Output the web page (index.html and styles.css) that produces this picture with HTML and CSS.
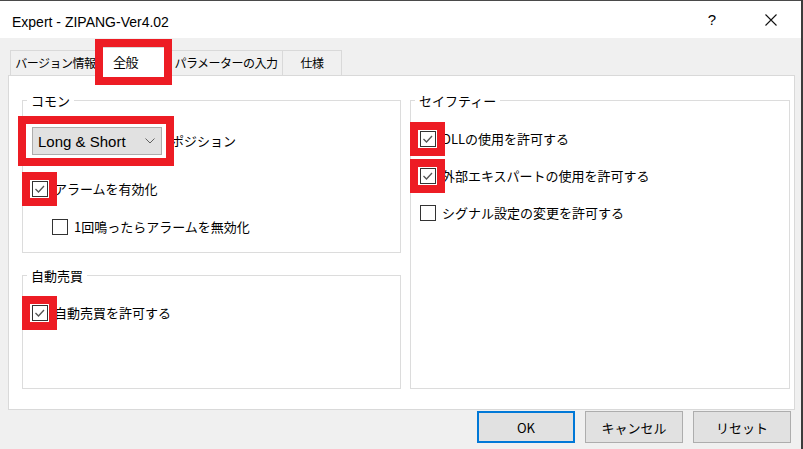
FILE: index.html
```html
<!DOCTYPE html>
<html lang="ja">
<head>
    <meta charset="UTF-8">
    <title>Expert - ZIPANG-Ver4.02</title>
    <link rel="stylesheet" href="styles.css">
</head>
<body>
<div class="window">
    <div class="titlebar">
        <span class="title">Expert - ZIPANG-Ver4.02</span>
        <span class="help">?</span>
        <span class="close">
            <svg width="12" height="12" viewBox="0 0 12 12"><path d="M0.5 0.5 L11.5 11.5 M11.5 0.5 L0.5 11.5" stroke="#111" stroke-width="1.1" fill="none"/></svg>
        </span>
    </div>

    <div class="tabs">
        <div class="tab tab-info">バージョン情報</div>
        <div class="tab tab-general active hl">全般</div>
        <div class="tab tab-params">パラメーターの入力</div>
        <div class="tab tab-spec">仕様</div>
    </div>

    <div class="panel">
        <div class="col">
            <fieldset class="group group-common">
                <legend>コモン</legend>
                <div class="combo-row">
                    <div class="combo hl">
                        <span>Long &amp; Short</span>
                        <svg width="10" height="6" viewBox="0 0 10 6"><path d="M0.5 0.5 L5 5 L9.5 0.5" stroke="#606060" stroke-width="1" fill="none"/></svg>
                    </div>
                    <span class="label">ポジション</span>
                </div>
                <div class="row first">
                    <span class="box checked hl"><svg width="14" height="14" viewBox="0 0 14 14"><path d="M2.5 7 L5.5 10 L11 4" stroke="#555" stroke-width="1.3" fill="none"/></svg></span>
                    <span class="label">アラームを有効化</span>
                </div>
                <div class="row sub">
                    <span class="box"></span>
                    <span class="label">1回鳴ったらアラームを無効化</span>
                </div>
            </fieldset>

            <fieldset class="group group-auto">
                <legend>自動売買</legend>
                <div class="row first">
                    <span class="box checked hl"><svg width="14" height="14" viewBox="0 0 14 14"><path d="M2.5 7 L5.5 10 L11 4" stroke="#555" stroke-width="1.3" fill="none"/></svg></span>
                    <span class="label">自動売買を許可する</span>
                </div>
            </fieldset>
        </div>

        <fieldset class="group group-safety">
            <legend>セイフティー</legend>
            <div class="row first">
                <span class="box checked hl"><svg width="14" height="14" viewBox="0 0 14 14"><path d="M2.5 7 L5.5 10 L11 4" stroke="#555" stroke-width="1.3" fill="none"/></svg></span>
                <span class="label">DLLの使用を許可する</span>
            </div>
            <div class="row">
                <span class="box checked hl"><svg width="14" height="14" viewBox="0 0 14 14"><path d="M2.5 7 L5.5 10 L11 4" stroke="#555" stroke-width="1.3" fill="none"/></svg></span>
                <span class="label">外部エキスパートの使用を許可する</span>
            </div>
            <div class="row">
                <span class="box"></span>
                <span class="label">シグナル設定の変更を許可する</span>
            </div>
        </fieldset>
    </div>

    <div class="buttons">
        <button class="btn default">OK</button>
        <button class="btn">キャンセル</button>
        <button class="btn">リセット</button>
    </div>
</div>
</body>
</html>
```

FILE: styles.css
```css
body {
    margin: 0;
    background: #3c3c3c;
    font-family: "Noto Sans CJK JP", "Liberation Sans", sans-serif;
    color: #000;
}
.window {
    width: 801px;
    height: 448px;
    border-top: 1px solid #4a4a4a;
    background: #f0f0f0;
    overflow: hidden;
}
.titlebar {
    display: flex;
    align-items: center;
    height: 37px;
    background: #fff;
}
.title {
    font-family: "Liberation Sans", sans-serif;
    font-size: 14px;
    margin: 4px 0 0 12px;
    flex: 1;
}
.help {
    font-family: "Liberation Sans", sans-serif;
    font-size: 15px;
    margin-right: 49px;
}
.close {
    display: flex;
    margin-right: 24px;
}

/* tabs */
.tabs {
    display: flex;
    align-items: flex-end;
    margin: 9px 0 0 10px;
}
.tab {
    box-sizing: border-box;
    height: 25px;
    line-height: 23px;
    font-size: 12px;
    letter-spacing: -0.5px;
    text-align: center;
    border: 1px solid #d9d9d9;
    border-bottom: none;
    background: #f0f0f0;
}
.tab + .tab {
    border-left: none;
}
.tab-info { width: 87px; padding-left: 4px; }
.tab-general { width: 73px; }
.tab-params { width: 113px; }
.tab-spec { width: 59px; }
.tab.active {
    position: relative;
    z-index: 1;
    height: 29px;
    line-height: 27px;
    margin-bottom: -1px;
    background: #fff;
    font-size: 13px;
    text-align: left;
    padding-left: 16px;
}

/* red annotation frames */
.hl {
    position: relative;
}
.hl::after {
    content: "";
    position: absolute;
    border: 8px solid #ed1c24;
}
.tab.hl::after {
    top: -9px;
    bottom: -9px;
    left: -2px;
    right: -3px;
}
.combo.hl::after {
    top: -12px;
    bottom: -12px;
    left: -15px;
    right: -13px;
}
.box.hl::after {
    top: -10px;
    bottom: -10px;
    left: -11px;
    right: -10px;
}

/* panel */
.panel {
    display: flex;
    gap: 9px;
    background: #fff;
    border: 1px solid #d9d9d9;
    margin: 0 6px 0 8px;
    padding: 16px 4px 20px 13px;
}
.col {
    display: flex;
    flex-direction: column;
    width: 379px;
}
.group {
    box-sizing: border-box;
    margin: 0;
    padding: 0 9px;
    border: 1px solid #dcdcdc;
    min-width: 0;
}
.group legend {
    font-size: 13px;
    line-height: 17px;
    height: 17px;
    padding: 0 4px;
    margin-left: -5px;
}
.group-common {
    height: 161px;
}
.group-auto {
    height: 122px;
    margin-top: 14px;
}
.group-auto .row.first {
    margin-top: 21px;
}
.group-safety {
    width: 380px;
    height: 297px;
}
.group-safety .row {
    margin-top: 21px;
}
.group-safety .row.first {
    margin-top: 22px;
}

.combo-row {
    display: flex;
    align-items: center;
    margin-top: 18px;
}
.combo {
    box-sizing: border-box;
    display: flex;
    align-items: center;
    justify-content: space-between;
    width: 130px;
    height: 28px;
    padding: 0 6px 0 5px;
    background: #e1e1e1;
    border: 1px solid #adadad;
    font-family: "Liberation Sans", sans-serif;
    font-size: 15px;
}
.combo-row .label {
    margin-left: 9px;
}

.row {
    display: flex;
    align-items: center;
    height: 16px;
}
.row.first {
    margin-top: 26px;
}
.row.sub {
    margin-top: 22px;
    padding-left: 20px;
}
.label {
    font-size: 13px;
    line-height: 16px;
    white-space: nowrap;
}
.box {
    box-sizing: border-box;
    display: flex;
    align-items: center;
    justify-content: center;
    width: 16px;
    height: 16px;
    border: 1px solid #333;
    background: #fff;
    margin-right: 6px;
    flex: none;
}

/* buttons */
.buttons {
    display: flex;
    justify-content: flex-end;
    gap: 10px;
    margin: 1px 10px 0 0;
}
.btn {
    box-sizing: border-box;
    width: 98px;
    height: 32px;
    background: #e1e1e1;
    border: 1px solid #adadad;
    font-family: "Noto Sans CJK JP", sans-serif;
    font-size: 13px;
    color: #000;
    padding: 0;
}
.btn.default {
    border: 2px solid #0078d7;
}
```
